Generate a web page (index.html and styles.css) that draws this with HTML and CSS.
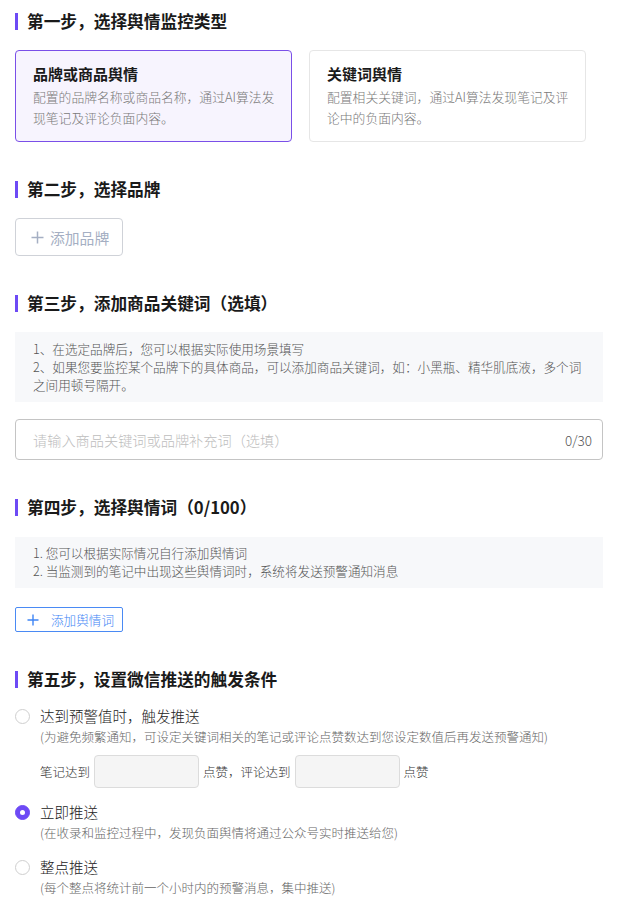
FILE: index.html
```html
<!DOCTYPE html>
<html lang="zh-CN">
<head>
<meta charset="utf-8">
<title>舆情监控设置</title>
<link rel="stylesheet" href="styles.css">
</head>
<body>
<div class="page">
  <section class="section">
    <h2 class="step-title">第一步，选择舆情监控类型</h2>
    <div class="type-cards">
      <div class="type-card is-active">
        <div class="type-card__title">品牌或商品舆情</div>
        <div class="type-card__desc">配置的品牌名称或商品名称，通过AI算法发现笔记及评论负面内容。</div>
      </div>
      <div class="type-card">
        <div class="type-card__title">关键词舆情</div>
        <div class="type-card__desc">配置相关关键词，通过AI算法发现笔记及评论中的负面内容。</div>
      </div>
    </div>
  </section>

  <section class="section">
    <h2 class="step-title">第二步，选择品牌</h2>
    <div class="btn-row">
      <button class="btn-add-brand" type="button">
        <svg class="plus" width="13" height="13" viewBox="0 0 13 13"><path d="M6.5 0.5v12M0.5 6.5h12" stroke="currentColor" stroke-width="1.5" fill="none"/></svg>
        <span>添加品牌</span>
      </button>
    </div>
  </section>

  <section class="section">
    <h2 class="step-title">第三步，添加商品关键词（选填）</h2>
    <div class="tips tips--three">
      <div>1、在选定品牌后，您可以根据实际使用场景填写</div>
      <div>2、如果您要监控某个品牌下的具体商品，可以添加商品关键词，如：小黑瓶、精华肌底液，多个词之间用顿号隔开。</div>
    </div>
    <div class="field">
      <input class="field__input" type="text" placeholder="请输入商品关键词或品牌补充词（选填）">
      <span class="field__count">0/30</span>
    </div>
  </section>

  <section class="section section--four">
    <h2 class="step-title">第四步，选择舆情词（0/100）</h2>
    <div class="tips tips--two">
      <div>1. 您可以根据实际情况自行添加舆情词</div>
      <div>2. 当监测到的笔记中出现这些舆情词时，系统将发送预警通知消息</div>
    </div>
    <div class="btn-row">
      <button class="btn-add-word" type="button">
        <svg class="plus" width="12" height="12" viewBox="0 0 12 12"><path d="M6 0.5v11M0.5 6h11" stroke="currentColor" stroke-width="1.4" fill="none"/></svg>
        <span>添加舆情词</span>
      </button>
    </div>
  </section>

  <section class="section section--options">
    <h2 class="step-title">第五步，设置微信推送的触发条件</h2>
    <div class="options">
      <div class="option">
        <span class="radio"></span>
        <div class="option__body">
          <div class="option__label">达到预警值时，触发推送</div>
          <div class="option__note">(为避免频繁通知，可设定关键词相关的笔记或评论点赞数达到您设定数值后再发送预警通知)</div>
          <div class="threshold">
            <span>笔记达到</span>
            <input class="threshold__input" type="text">
            <span>点赞，评论达到</span>
            <input class="threshold__input" type="text">
            <span>点赞</span>
          </div>
        </div>
      </div>
      <div class="option">
        <span class="radio is-checked"></span>
        <div class="option__body">
          <div class="option__label">立即推送</div>
          <div class="option__note">(在收录和监控过程中，发现负面舆情将通过公众号实时推送给您)</div>
        </div>
      </div>
      <div class="option">
        <span class="radio"></span>
        <div class="option__body">
          <div class="option__label">整点推送</div>
          <div class="option__note">(每个整点将统计前一个小时内的预警消息，集中推送)</div>
        </div>
      </div>
    </div>
  </section>
</div>
</body>
</html>
```

FILE: styles.css
```css
* { box-sizing: border-box; }

html, body {
  margin: 0;
  padding: 0;
  background: #fff;
}

body {
  font-family: "Noto Sans CJK SC", "Noto Sans", sans-serif;
  color: #1f1f1f;
}

.page {
  padding: 10px 15px 0;
  display: flex;
  flex-direction: column;
  gap: 36px;
}

.section {
  display: flex;
  flex-direction: column;
  gap: 18px;
}

.section--four { gap: 19px; }
.section--options { gap: 15px; }

.step-title {
  margin: 0;
  font-size: 16.7px;
  line-height: 22px;
  font-weight: 700;
  color: #1a1a1a;
  display: flex;
  align-items: center;
}

.step-title::before {
  content: "";
  width: 3px;
  height: 17px;
  background: #6d4af5;
  margin-right: 9px;
  flex: none;
}

.type-cards {
  display: grid;
  grid-template-columns: 277px 277px;
  gap: 17px;
}

.type-card {
  height: 92px;
  border: 1px solid #e6e6e6;
  border-radius: 4px;
  padding: 12px 10px 0 17px;
  background: #fff;
}

.type-card.is-active {
  border-color: #7a4fe8;
  background: #f7f4fe;
}

.type-card__title {
  font-size: 15px;
  line-height: 22px;
  font-weight: 700;
  color: #1a1a1a;
}

.type-card__desc {
  margin-top: 1px;
  font-size: 12.8px;
  line-height: 21px;
  font-weight: 300;
  color: #7a7a7a;
}

.btn-row {
  display: flex;
}

.btn-add-brand {
  width: 108px;
  height: 38px;
  border: 1px solid #cfd2d8;
  border-radius: 4px;
  background: #fff;
  color: #a5afc3;
  font-family: inherit;
  font-size: 14.8px;
  display: flex;
  align-items: center;
  padding: 0 0 0 15px;
  gap: 6px;
}

.plus { flex: none; }

.tips {
  background: #f7f8fa;
  font-size: 12.6px;
  line-height: 18px;
  font-weight: 300;
  color: #555;
  padding: 8px 18px;
}

.tips--two { padding: 7px 18px 8px; }

.field {
  height: 41px;
  margin-top: -1px;
  border: 1px solid #c4c4c4;
  border-radius: 4px;
  display: flex;
  align-items: center;
  padding: 0 10px 0 17px;
}

.field__input {
  flex: 1;
  border: none;
  outline: none;
  padding: 0;
  font-family: inherit;
  font-size: 14.2px;
  font-weight: 300;
  color: #333;
  background: transparent;
}

.field__input::placeholder { color: #bdbdbd; }

.field__count {
  font-size: 13.5px;
  font-weight: 300;
  color: #555;
}

.btn-add-word {
  width: 108px;
  height: 25px;
  border: 1px solid #4a8af4;
  border-radius: 2px;
  background: #fff;
  color: #3f85f5;
  font-family: inherit;
  font-size: 12.6px;
  font-weight: 300;
  display: flex;
  align-items: center;
  padding: 0 0 0 11px;
  gap: 12px;
}

.options {
  display: flex;
  flex-direction: column;
  gap: 13px;
}

.option {
  display: flex;
  align-items: flex-start;
}

.radio {
  flex: none;
  width: 15px;
  height: 15px;
  border: 1px solid #cfcfcf;
  border-radius: 50%;
  background: #fff;
  margin-top: 3.5px;
  margin-right: 10px;
  position: relative;
}

.radio.is-checked {
  border-color: #6d4af5;
  background: #6d4af5;
}

.radio.is-checked::after {
  content: "";
  position: absolute;
  left: 50%;
  top: 50%;
  width: 5px;
  height: 5px;
  margin: -2.5px 0 0 -2.5px;
  background: #fff;
  border-radius: 50%;
}

.option__label {
  font-size: 14.5px;
  line-height: 22px;
  font-weight: 300;
  color: #222;
}

.option__note {
  font-size: 12.5px;
  line-height: 20px;
  font-weight: 300;
  color: #666;
}

.threshold {
  margin-top: 8px;
  display: flex;
  align-items: center;
  font-size: 12.5px;
  font-weight: 300;
  color: #333;
  gap: 4px;
}

.threshold__input {
  width: 105px;
  height: 33px;
  border: 1px solid #dcdcdc;
  border-radius: 4px;
  background: #f5f5f5;
  outline: none;
}
```
